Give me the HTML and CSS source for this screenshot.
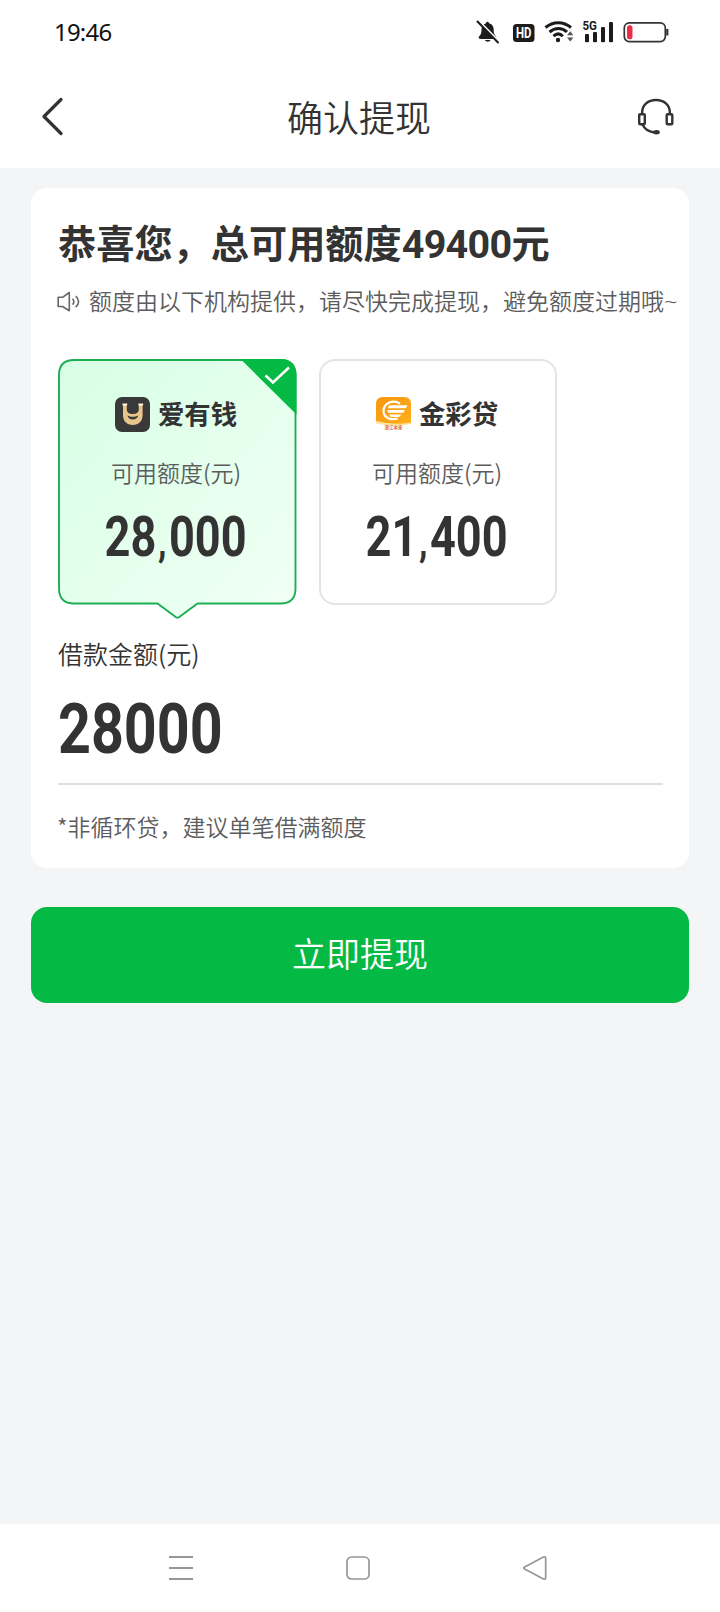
FILE: index.html
```html
<!DOCTYPE html>
<html lang="zh-CN">
<head>
<meta charset="utf-8">
<title>确认提现</title>
<link rel="stylesheet" href="styles.css">
</head>
<body>
<div class="screen">
  <div class="status">
    <span class="time">19:46</span>
    <svg class="status-icons" width="200" height="30" viewBox="0 0 200 30">
      <g fill="#1c1c1c">
        <path d="M9 21c-2 0-3-1-2-2.500 2-2 2.500-3.500 2.500-7 0-3 1.500-5.500 4.500-6.300 0-2 3-2 3 0 3.500 1 4.700 3.500 4.700 6.800 0 3 .5 4.500 2.300 6.500 1 1.500 0 2.500-1.300 2.500zM13 22h5.500c-.7 2.300-4.800 2.300-5.500 0z"/>
        <path d="M6.500 2.500L27 23.500" stroke="#fff" stroke-width="2"/>
        <path d="M5.500 3.500L26 24.500" stroke="#1c1c1c" stroke-width="2" stroke-linecap="round"/>
        <rect x="41" y="6" width="21.500" height="18" rx="3.500"/>
      </g>
      <text class="hd" x="51.800" y="19.800" text-anchor="middle" textLength="15.500" lengthAdjust="spacingAndGlyphs">HD</text>
      <g fill="none" stroke="#1c1c1c" stroke-width="3">
        <path d="M73.500 9.500c7.500-6.500 18-6.500 25.500 0"/>
        <path d="M77.500 14c5.500-4.800 12.500-4.800 17.500 0"/>
        <path d="M81.500 18.200c3-2.800 6.500-2.800 9.300 0"/>
      </g>
      <circle cx="86" cy="22" r="2.200" fill="#1c1c1c"/>
      <path d="M95 17.200l3.200-4 3.200 4zM95 19.500h6.400l-3.200 4z" fill="#555"/>
      <text class="net" x="110.500" y="11.800" textLength="14.500" lengthAdjust="spacingAndGlyphs">5G</text>
      <g fill="#1c1c1c">
        <rect x="113" y="16" width="4" height="8.300" rx="1"/>
        <rect x="121" y="14" width="4" height="10.300" rx="1"/>
        <rect x="129" y="9" width="4" height="15.300" rx="1"/>
        <rect x="137" y="4" width="4" height="20.300" rx="1"/>
      </g>
      <rect x="152.300" y="4.800" width="41" height="18.800" rx="5" fill="none" stroke="#333" stroke-width="1.700"/>
      <rect x="155" y="7.300" width="5.500" height="14" rx="2.500" fill="#ee2c48"/>
      <path d="M195.300 11v6.500" stroke="#333" stroke-width="2.200"/>
    </svg>
  </div>

  <header class="header">
    <svg class="back" width="24" height="40" viewBox="0 0 24 40"><path d="M20 2.500L3 19.500L20 36.500" fill="none" stroke="#333" stroke-width="3.200" stroke-linecap="round" stroke-linejoin="round"/></svg>
    <h1 class="title">确认提现</h1>
    <svg class="service" width="40" height="40" viewBox="0 0 40 40" fill="none" stroke="#333" stroke-width="2.400">
      <path d="M5.200 17.500v-2C5.200 8 11 3 19 3s13.800 5 13.800 12.500v2"/>
      <rect x="2.200" y="17.300" width="5.600" height="10" rx="1"/>
      <rect x="29.700" y="17.300" width="5.600" height="10" rx="1"/>
      <path d="M5.500 27.500c2 4.500 6.500 7.500 12.500 8"/>
      <ellipse cx="19.500" cy="35.300" rx="3.300" ry="2.200" fill="#333" stroke="none"/>
    </svg>
  </header>

  <main class="main">
    <section class="card">
      <h2 class="headline">恭喜您，总可用额度<span class="headline-num">49400</span>元</h2>
      <div class="tip">
        <svg class="speaker" width="32" height="24" viewBox="0 0 32 24" fill="none" stroke="#666" stroke-width="1.600" stroke-linejoin="round">
          <path d="M1.200 8.300h4.300L12.300 3.500v18.300L5.500 17.500H1.200z"/>
          <path d="M15.500 9.700c1.800 1.800 1.800 4.300 0 6M18.700 7.200c3.800 3.300 3.800 7.800 0 11"/>
        </svg>
        <span>额度由以下机构提供，请尽快完成提现，避免额度过期哦<span class="tilde">~</span></span>
      </div>

      <div class="lenders">
        <div class="lender selected">
          <svg class="lender-bg" width="239" height="262" viewBox="0 0 239 262">
            <defs>
              <linearGradient id="mint" x1="0" y1="0" x2="1" y2="1"><stop offset="0" stop-color="#d7ffe5"/><stop offset="1" stop-color="#f1fff5"/></linearGradient>
              <clipPath id="tile"><rect x="0" y="0" width="238.500" height="246" rx="15"/></clipPath>
            </defs>
            <path d="M16 1H222.500Q237.500 1 237.500 16V229.500Q237.500 244.500 222.500 244.500H139.500L122 257.500Q119.500 259.800 117 257.500L99.500 244.500H16Q1 244.500 1 229.500V16Q1 1 16 1Z" fill="url(#mint)" stroke="#1daf54" stroke-width="1.900"/>
            <path d="M182.500 0H239V56z" fill="#04ba45" clip-path="url(#tile)"/>
            <path d="M207.500 16.500l7.500 7L231 8.500" fill="none" stroke="#fff" stroke-width="2.600"/>
          </svg>
          <div class="brand">
            <svg class="logo" width="35" height="35" viewBox="0 0 35 35">
              <rect width="35" height="35" rx="7" fill="#39393a"/>
              <path d="M8 8h3.800v5c.8 3.500 3.200 4 6 4s5.200-.5 6-4V8h3.800v10c0 6.300-4 10-9.800 10S8 24.300 8 18z" fill="#e9c58c"/>
              <path d="M12.500 18.500c3 1.700 7.600 1.700 10.600 0-.7 5.300-9.900 5.300-10.600 0z" fill="#39393a"/>
              <path d="M7.500 6.500h4.700v2H7.500zM23.400 6.500h4.700v2h-4.700z" fill="#fff1dc"/>
            </svg>
            <span class="name">爱有钱</span>
          </div>
          <div class="label">可用额度(元)</div>
          <div class="limit"><span class="din">28<i class="comma">,</i>000</span></div>
        </div>
        <div class="lender">
          <div class="brand">
            <svg class="logo" width="35" height="35" viewBox="0 0 35 35">
              <defs>
                <linearGradient id="amber" x1="0" y1="0" x2="1" y2="1"><stop offset="0" stop-color="#f8960f"/><stop offset="1" stop-color="#ffb01e"/></linearGradient>
              </defs>
              <path d="M7 0h21q7 0 7 7v19q-17.500 4-35-1V7q0-7 7-7z" fill="url(#amber)"/>
              <path d="M0 24q17.500 4.500 35 1.500v1.500q-17.500 3.500-35-.5z" fill="#ffe19b"/>
              <path d="M24 6.500C17 2 8 6 7.500 13.500 7.500 20 13 23.500 21.500 21.500" fill="none" stroke="#fff" stroke-width="2.200"/>
              <path d="M13 8.300h18.500l-1.700 2.900H12zM11.500 13h17.500l-1.700 2.700H12zM13 17.600h12.500l-2.500 2.500h-8z" fill="#fff"/>
              <text class="logo-caption" x="17.500" y="32.300" text-anchor="middle">浙江本来</text>
            </svg>
            <span class="name">金彩贷</span>
          </div>
          <div class="label">可用额度(元)</div>
          <div class="limit"><span class="din">21<i class="comma">,</i>400</span></div>
        </div>
      </div>

      <div class="amount-label">借款金额(元)</div>
      <div class="amount"><span class="din">28000</span></div>
      <p class="note">*非循环贷，建议单笔借满额度</p>
    </section>
    <button class="submit" type="button">立即提现</button>
  </main>

  <nav class="nav">
    <svg width="26" height="26" viewBox="0 0 26 26"><path d="M1 2h24M1 13h24M1 24h24" stroke="#979797" stroke-width="2"/></svg>
    <svg width="26" height="26" viewBox="0 0 26 26"><rect x="2" y="2" width="22" height="22" rx="4.500" fill="none" stroke="#979797" stroke-width="1.700"/></svg>
    <svg width="26" height="26" viewBox="0 0 26 26"><path d="M2.600 12L21.500 2Q23.700 1.200 23.700 3.500V22.500Q23.700 24.800 21.500 24L2.600 14Q1 13 2.600 12Z" fill="none" stroke="#979797" stroke-width="1.700"/></svg>
  </nav>
</div>
</body>
</html>
```

FILE: styles.css
```css
* { box-sizing: border-box; margin: 0; padding: 0; }

body {
  background: #f4f5f7;
  color: #333;
  font-family: "Noto Sans CJK SC", sans-serif;
}

.screen {
  display: flex;
  flex-direction: column;
  width: 720px;
  height: 1612px;
  overflow: hidden;
}

.status {
  display: flex;
  align-items: center;
  justify-content: space-between;
  height: 64px;
  padding: 0 48px 0 54px;
  background: #fff;
}

.time {
  font: 24px/32px "Noto Sans", sans-serif;
  letter-spacing: -0.8px;
  color: #111;
}

.status-icons { margin: 2px 0 0; }
.hd { font: bold 14px Roboto, sans-serif; fill: #fff; }
.net { font: bold 13.5px Roboto, sans-serif; fill: #1c1c1c; }

.header {
  display: flex;
  align-items: center;
  justify-content: space-between;
  height: 104px;
  padding: 0 43px 0 41px;
  background: #fff;
}

.back { margin: 1px 14px 0 0; }
.title { font-size: 36px; font-weight: 350; line-height: 52px; }
.service { margin: 1px 0 0 -2px; }

.main {
  display: flex;
  flex: 1;
  flex-direction: column;
  gap: 39px;
  padding: 20px 31px 0;
}

.card {
  height: 680px;
  padding: 29px 26px 0 27px;
  border-radius: 16px;
  background: #fff;
}

.headline { height: 50px; font-size: 38.2px; font-weight: 700; line-height: 50px; white-space: nowrap; }
.headline-num { font-family: Roboto, sans-serif; font-size: 39.5px; letter-spacing: -0.7px; }

.tip {
  display: flex;
  align-items: center;
  height: 34px;
  margin-top: 16px;
  margin-left: -1px;
  font-size: 23px;
  font-weight: 350;
  line-height: 34px;
  white-space: nowrap;
  color: #5c5c5c;
}
.speaker { flex: none; margin-top: 1px; }
.tilde { font-family: "Noto Sans", sans-serif; font-size: 24px; }

.lenders { display: flex; gap: 23px; margin-top: 42px; }

.lender {
  position: relative;
  width: 238px;
  height: 246px;
  padding: 35px 2px 0 0;
  border: 2px solid #e4e4e4;
  border-radius: 16px;
  text-align: center;
}
.lender.selected { border-color: transparent; }
.lender-bg { position: absolute; left: -2px; top: -2px; }

.brand {
  position: relative;
  display: flex;
  align-items: center;
  justify-content: center;
  gap: 8px;
  height: 36px;
}
.name { font-size: 26.4px; font-weight: 700; line-height: 32px; padding-bottom: 2px; }
.logo-caption { font: 700 4.500px "Noto Sans CJK SC", sans-serif; fill: #e36a2c; }

.label {
  position: relative;
  margin-top: 23px;
  font-size: 23px;
  font-weight: 350;
  line-height: 34px;
  color: #5c5c5c;
}

.limit { position: relative; height: 60px; margin-top: 13px; font-size: 55px; line-height: 60px; }

.din {
  display: inline-block;
  font-family: Roboto, sans-serif;
  font-weight: 700;
  transform: scaleX(0.82);
}
.comma { padding: 0 3px 0 2px; font-size: 42px; font-style: normal; line-height: 1; }

.amount-label { margin-top: 31px; font-size: 25px; font-weight: 350; line-height: 34px; }

.amount {
  height: 115px;
  padding-top: 11px;
  border-bottom: 2px solid #dedede;
  font-size: 70px;
  line-height: 84px;
}
.amount .din { transform-origin: 0 50%; }

.note {
  margin: 24px 0 0 -1px;
  font-size: 23px;
  font-weight: 350;
  line-height: 34px;
  color: #5c5c5c;
}

.submit {
  height: 96px;
  padding-bottom: 5px;
  border: 0;
  border-radius: 16px;
  background: #04ba45;
  color: #fff;
  font: 350 34px/50px "Noto Sans CJK SC", sans-serif;
}

.nav {
  display: flex;
  justify-content: center;
  gap: 151px;
  height: 88px;
  padding: 31px 5px 0 0;
  background: #fff;
}
```
